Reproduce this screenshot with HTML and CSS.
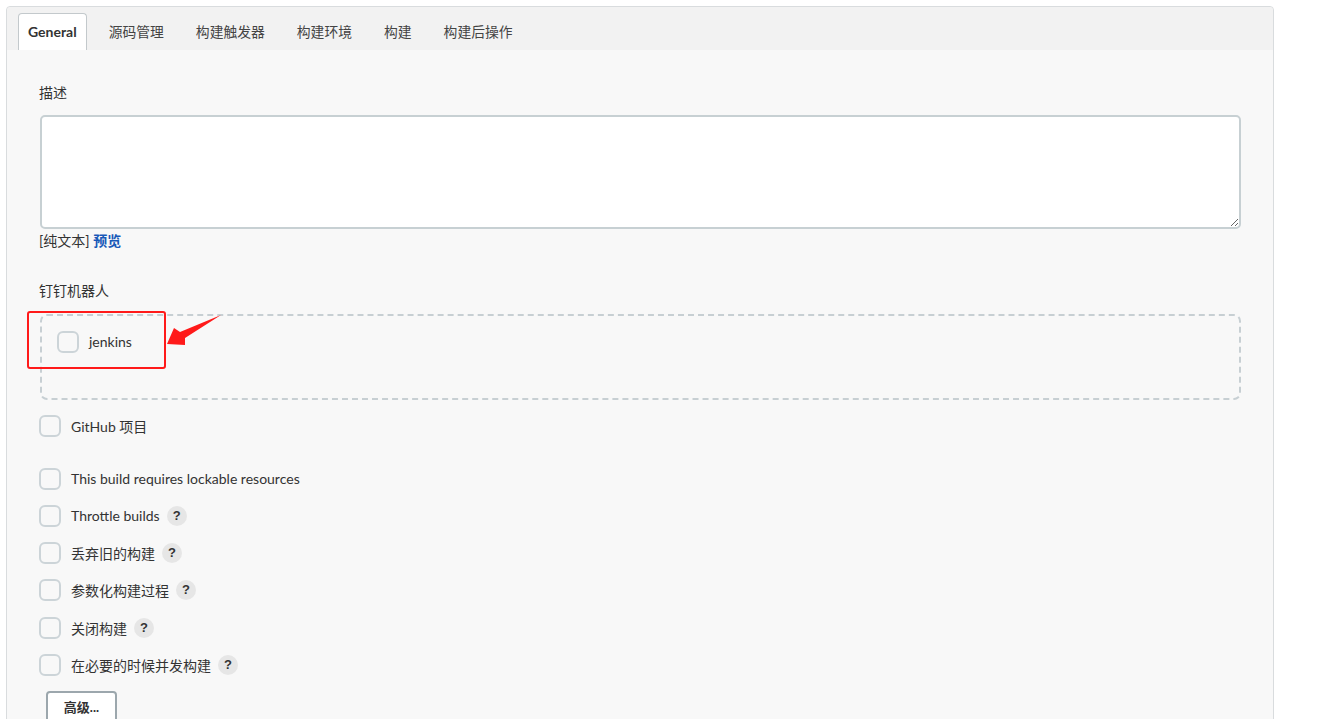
FILE: index.html
```html
<!DOCTYPE html>
<html lang="zh-CN">
<head>
<meta charset="utf-8">
<title>General</title>
<link rel="stylesheet" href="styles.css">
</head>
<body>
<div class="panel">
  <div class="tabbar">
    <div class="tab active">General</div>
    <div class="tab">源码管理</div>
    <div class="tab">构建触发器</div>
    <div class="tab">构建环境</div>
    <div class="tab">构建</div>
    <div class="tab">构建后操作</div>
  </div>
  <div class="content">
    <div class="label">描述</div>
    <textarea class="desc"></textarea>
    <div class="hint">[纯文本] <a class="preview">预览</a></div>
    <div class="label label-ding">钉钉机器人</div>
    <div class="dashed">
      <div class="row"><span class="cb"></span><span class="txt">jenkins</span></div>
    </div>
    <div class="row row-github"><span class="cb"></span><span class="txt">GitHub 项目</span></div>
    <div class="row"><span class="cb"></span><span class="txt">This build requires lockable resources</span></div>
    <div class="row"><span class="cb"></span><span class="txt">Throttle builds</span><span class="help">?</span></div>
    <div class="row"><span class="cb"></span><span class="txt">丢弃旧的构建</span><span class="help">?</span></div>
    <div class="row"><span class="cb"></span><span class="txt">参数化构建过程</span><span class="help">?</span></div>
    <div class="row row-tall"><span class="cb"></span><span class="txt">关闭构建</span><span class="help">?</span></div>
    <div class="row"><span class="cb"></span><span class="txt">在必要的时候并发构建</span><span class="help">?</span></div>
    <button class="adv">高级...</button>
  </div>
</div>
<div class="redbox"></div>
<svg class="arrow" width="60" height="36" viewBox="165 312 60 36">
  <polygon points="167,344 174,328 180,332 221,315 185,338 185,345" fill="#ff1a1a"/>
</svg>
</body>
</html>
```
FILE: styles.css
```css
* { box-sizing: border-box; }
html, body { margin: 0; padding: 0; background: #fff; }
body {
  font-family: "Lato", "Noto Sans CJK SC", sans-serif;
  font-size: 14px;
  color: #333;
  height: 719px;
  overflow: hidden;
}
.panel {
  margin: 6px 0 0 6px;
  width: 1268px;
  height: 760px;
  border: 1px solid #d9dcde;
  border-radius: 4px;
  background: #f8f8f8;
}
.tabbar {
  height: 43px;
  background: #f2f2f2;
  display: flex;
  align-items: flex-end;
  padding-left: 11px;
  border-radius: 4px 4px 0 0;
}
.tab {
  height: 37px;
  padding: 0 10px 1px;
  margin-right: 12px;
  display: flex;
  align-items: center;
  font-size: 13.8px;
  color: #444;
}
.tab.active {
  background: #fff;
  border: 1px solid #c3c9cc;
  border-bottom: none;
  border-radius: 4px 4px 0 0;
  font-weight: bold;
  font-size: 14px;
  color: #333;
  padding: 0 9px 1px;
}
.content {
  padding: 33px 32px 0 32px;
  display: flex;
  flex-direction: column;
  align-items: flex-start;
}
.label {
  height: 20px;
  line-height: 20px;
  margin-bottom: 12px;
}
.desc {
  display: block;
  width: 1201px;
  height: 114px;
  margin: 0 0 0 1px;
  border: 2px solid #c7d0d3;
  border-radius: 5px;
  background: #fff;
  resize: vertical;
}
.hint {
  height: 20px;
  line-height: 20px;
  margin-top: 2px;
}
.preview { color: #1859b8; font-weight: bold; }
.label-ding { margin-top: 30px; margin-bottom: 13px; }
.dashed {
  width: 1201px;
  margin-left: 1px;
  height: 86px;
  border: 2px dashed #c7cfd3;
  border-radius: 7px;
  padding: 7px 0 0 15px;
}
.row {
  height: 37px;
  display: flex;
  align-items: center;
}
.row-tall { height: 38px; padding-top: 1px; }
.cb {
  width: 22px;
  height: 22px;
  border: 2px solid #ccd4d8;
  border-radius: 6px;
  background: transparent;
  flex: none;
}
.txt { margin-left: 10px; }
.row-github { margin-top: 7px; margin-bottom: 16px; }
.help {
  margin-left: 7px;
  width: 20px;
  height: 20px;
  border-radius: 50%;
  background: #e6e6e6;
  font-family: "Liberation Sans", sans-serif;
  font-weight: bold;
  font-size: 13px;
  display: flex;
  align-items: center;
  justify-content: center;
  color: #333;
}
.adv {
  margin: 8px 0 0 7px;
  width: 71px;
  height: 34px;
  background: #fff;
  border: 2px solid #9ca7ad;
  border-radius: 4px;
  font-family: inherit;
  font-size: 13px;
  font-weight: bold;
  color: #333;
  padding: 0 0 4px;
}
.redbox {
  position: absolute;
  left: 27px;
  top: 311px;
  width: 139px;
  height: 58px;
  border: 2px solid #ff1a1a;
  border-radius: 3px;
}
.arrow {
  position: absolute;
  left: 165px;
  top: 312px;
}
```
